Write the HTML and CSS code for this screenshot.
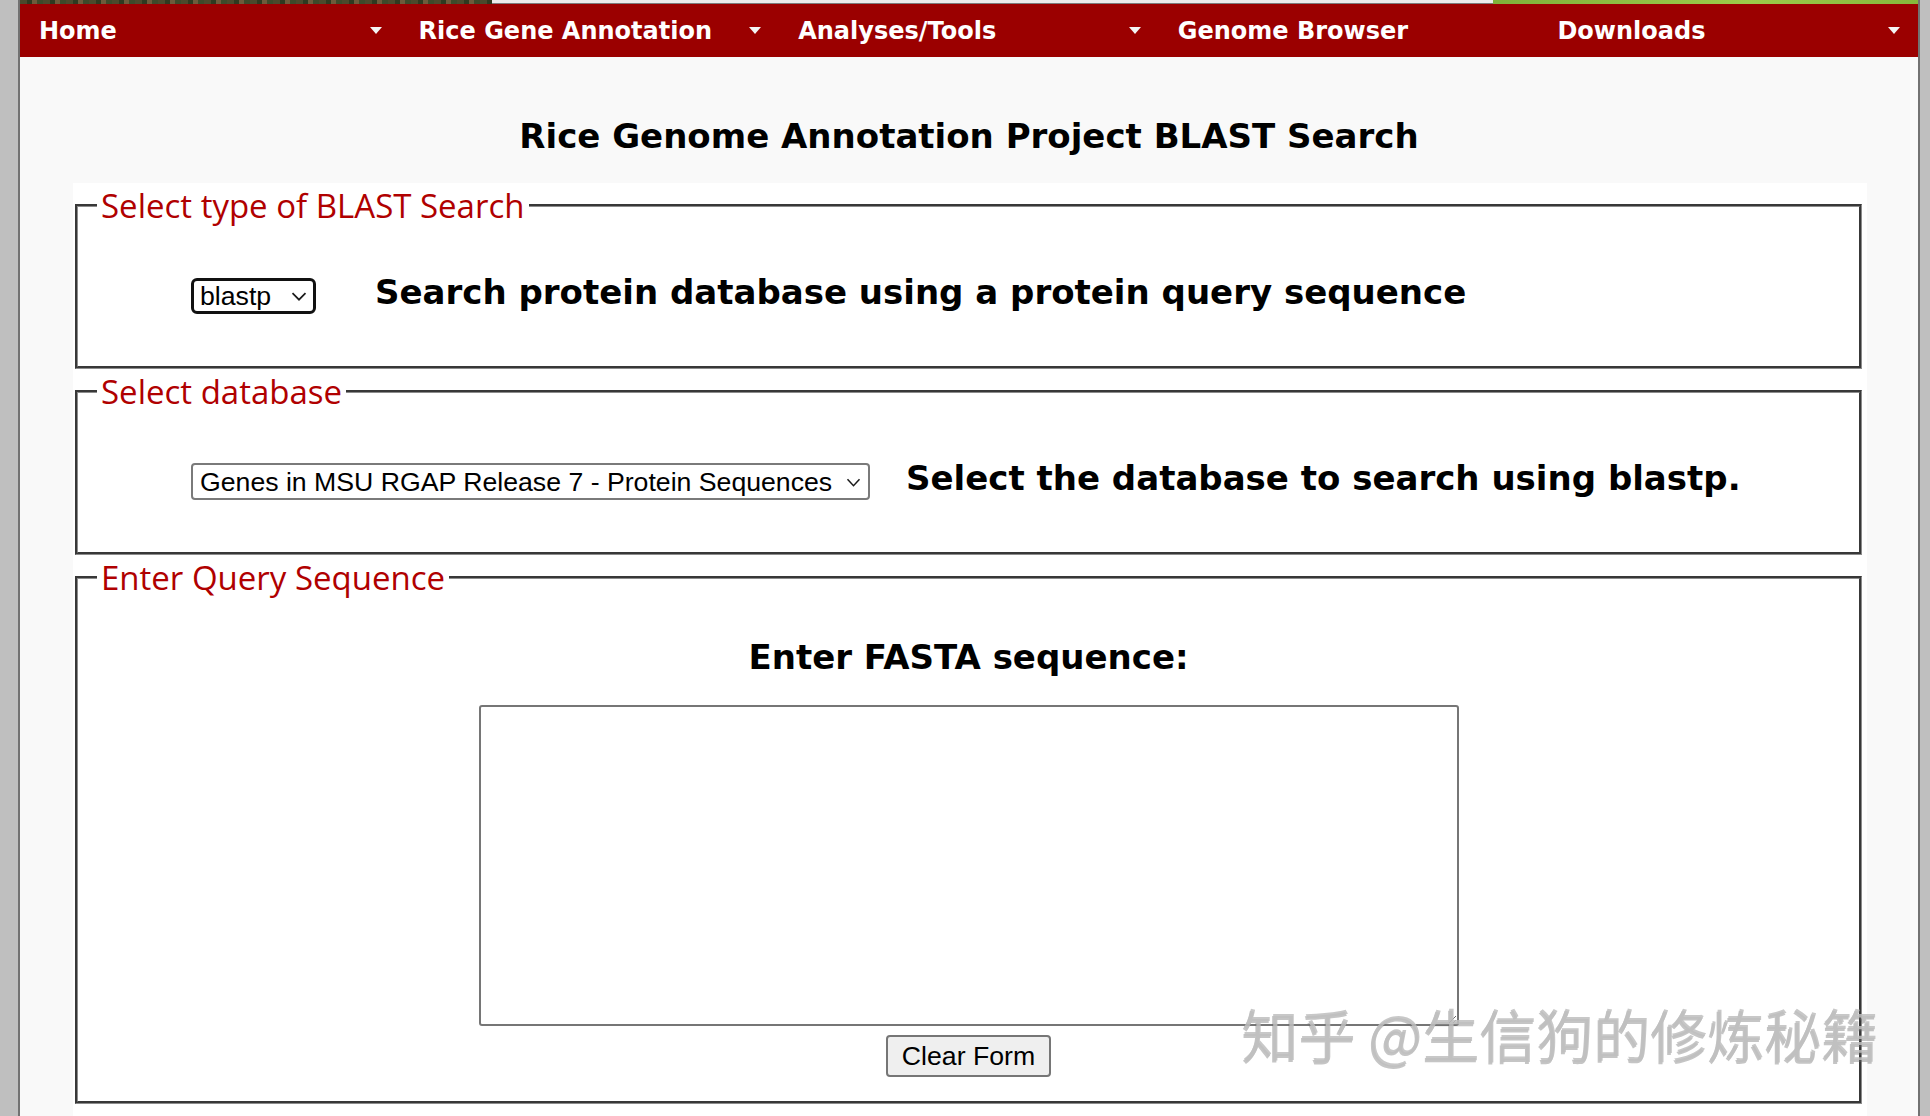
FILE: index.html
```html
<!DOCTYPE html>
<html lang="en">
  <head>
    <meta charset="UTF-8" />
    <meta name="viewport" content="width=device-width, initial-scale=1.0" />
    <title>Rice Genome Annotation Project BLAST Search</title>
    <link rel="stylesheet" href="styles.css">
  </head>
  <body>
    <div class="page">
      <div class="banner">
        <span class="banner-left"></span>
        <span class="banner-mid"></span>
        <span class="banner-right"></span>
      </div>
      <nav class="menu">
        <ul>
          <li><a href="#">Home</a><span class="caret"></span></li>
          <li><a href="#">Rice Gene Annotation</a><span class="caret"></span></li>
          <li><a href="#">Analyses/Tools</a><span class="caret"></span></li>
          <li><a href="#">Genome Browser</a></li>
          <li><a href="#">Downloads</a><span class="caret"></span></li>
        </ul>
      </nav>

      <h1 class="title">Rice Genome Annotation Project BLAST Search</h1>

      <form class="blast-form">
        <fieldset>
          <legend>Select type of BLAST Search</legend>
          <div class="row">
            <div class="select-wrap select-program">
              <select name="program">
                <option>blastp</option>
                <option>blastn</option>
                <option>blastx</option>
                <option>tblastn</option>
                <option>tblastx</option>
              </select>
              <svg class="chevron" width="16" height="9" viewBox="0 0 16 9">
                <path d="M1.5 1.2l6.5 6.5 6.5-6.5" fill="none" stroke="#1a1a1a" stroke-width="1.7" />
              </svg>
            </div>
            <h2 class="hint">Search protein database using a protein query sequence</h2>
          </div>
        </fieldset>

        <fieldset>
          <legend>Select database</legend>
          <div class="row">
            <div class="select-wrap select-database">
              <select name="database">
                <option>Genes in MSU RGAP Release 7 - Protein Sequences</option>
              </select>
              <svg class="chevron" width="15" height="9" viewBox="0 0 15 9">
                <path d="M1.5 1.2l6 6.5 6-6.5" fill="none" stroke="#1a1a1a" stroke-width="1.5" />
              </svg>
            </div>
            <h2 class="hint">Select the database to search using blastp.</h2>
          </div>
        </fieldset>

        <fieldset class="query">
          <legend>Enter Query Sequence</legend>
          <h2 class="query-label">Enter FASTA sequence:</h2>
          <textarea name="sequence" class="sequence"></textarea>
          <div class="actions">
            <button type="reset" class="btn">Clear Form</button>
          </div>
        </fieldset>
      </form>
    </div>

    <div class="watermark">知乎 @生信狗的修炼秘籍</div>
  </body>
</html>
```

FILE: styles.css
```css
html,
body {
  margin: 0;
  padding: 0;
  overflow: hidden;
}

body {
  background-color: #bfbfbf;
  font-family: "DejaVu Sans", Verdana, sans-serif;
}

.page {
  margin: 0 10px 0 18px;
  border-left: 2px solid #727272;
  border-right: 2px solid #727272;
  background-color: #f9f9f9;
  min-height: 1116px;
}

/* bandeau photo tout en haut */
.banner {
  display: flex;
  height: 4px;
}
.banner-left {
  width: 472px;
  background: repeating-linear-gradient(
    90deg,
    #4b4a2c 0 7px,
    #2e3a20 7px 12px,
    #6d5b3b 12px 17px,
    #3d4a2a 17px 23px
  );
}
.banner-mid {
  flex: 1;
  background-color: #ececec;
  border-bottom: 1px solid #7c7c7c;
  box-sizing: border-box;
}
.banner-right {
  width: 425px;
  background: linear-gradient(90deg, #7fb13a, #9ccb4a 60%, #86b83c);
}

/* menu */
.menu {
  background-color: #9b0000;
}
.menu ul {
  list-style-type: none;
  margin: 0;
  padding: 0;
  display: flex;
  height: 53px;
}
.menu li {
  flex: 1;
  display: flex;
  align-items: center;
  justify-content: space-between;
  padding: 0 18px 0 19px;
}
.menu a {
  color: #fff;
  text-decoration: none;
  font-weight: bold;
  font-size: 24px;
}
.caret {
  width: 0;
  height: 0;
  border-left: 6px solid transparent;
  border-right: 6px solid transparent;
  border-top: 7px solid #f4f4f4;
}

.title {
  margin: 59px 0 0;
  text-align: center;
  font-size: 34px;
  line-height: 40px;
  color: #000;
}

/* formulaire */
.blast-form {
  margin: 27px 51px 0 53px;
  background-color: #fff;
  padding-bottom: 60px;
}

fieldset {
  margin: 0 5px 0 2px;
  padding: 0 19px;
  border: 3px groove #8c8c8c;
  min-width: 0;
}

legend {
  padding: 0 4px;
  text-align: left;
  font-family: "Open Sans", "Noto Sans", sans-serif;
  font-size: 33px;
  color: #b00000;
}

.row {
  display: flex;
  align-items: center;
  padding: 44px 0 47px 94px;
  min-height: 36px;
}

.hint {
  margin: 0 0 7px;
  font-size: 34px;
  line-height: 40px;
  color: #000;
}

.select-wrap {
  position: relative;
}
.select-wrap select {
  appearance: none;
  -webkit-appearance: none;
  box-sizing: border-box;
  margin: 0;
  background-color: #fff;
  color: #000;
  font-family: "Liberation Sans", Arial, sans-serif;
  font-size: 26.67px;
  outline: none;
}
.chevron {
  position: absolute;
  top: 50%;
  margin-top: -4px;
  pointer-events: none;
}

.select-program {
  margin-right: 59px;
}
.select-program select {
  width: 125px;
  height: 36px;
  padding: 0 0 0 6px;
  border: 3px solid #111;
  border-radius: 6px;
}
.select-program .chevron {
  right: 9px;
}

.select-database {
  margin-right: 36px;
}
.select-database select {
  width: 679px;
  height: 37px;
  padding: 0 0 0 7px;
  border: 2px solid #7a7a7a;
  border-radius: 4px;
}
.select-database .chevron {
  right: 9px;
}

.query {
  text-align: center;
  padding-bottom: 24px;
}
.query-label {
  margin: 37px 0 28px;
  font-size: 34px;
  line-height: 40px;
  color: #000;
}
.sequence {
  display: block;
  box-sizing: border-box;
  width: 980px;
  height: 321px;
  margin: 0 auto;
  border: 2px solid #767676;
  border-radius: 3px;
  resize: both;
}
.actions {
  margin-top: 9px;
}
.btn {
  box-sizing: border-box;
  width: 165px;
  height: 42px;
  padding: 0;
  background-color: #efefef;
  border: 2px solid #767676;
  border-radius: 4px;
  font-family: "Liberation Sans", Arial, sans-serif;
  font-size: 26.67px;
  color: #000;
}

/* filigrane par-dessus la page */
.watermark {
  position: absolute;
  left: 1242px;
  top: 1004px;
  font-family: "Noto Sans CJK SC", sans-serif;
  font-size: 57px;
  line-height: 1;
  white-space: nowrap;
  color: rgba(190, 190, 190, 0.85);
  text-shadow: -1px 2px 0 rgba(110, 110, 110, 0.4);
  pointer-events: none;
}
```
